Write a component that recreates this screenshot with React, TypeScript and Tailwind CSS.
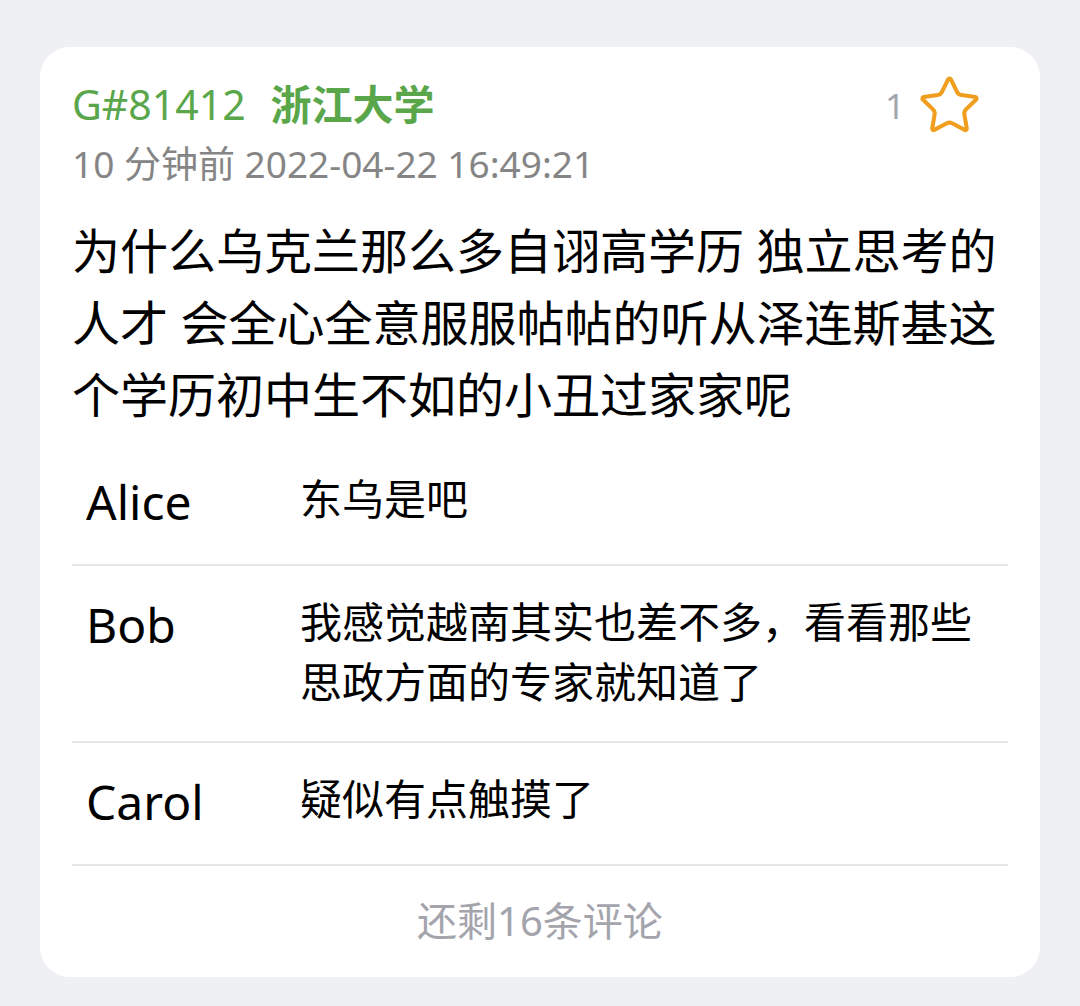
import React from "react";

const comments = [
  { name: "Alice", text: "东乌是吧" },
  { name: "Bob", text: "我感觉越南其实也差不多，看看那些思政方面的专家就知道了" },
  { name: "Carol", text: "疑似有点触摸了" },
];

function Star() {
  return (
    <svg width="65" height="65" viewBox="0 0 24 24" fill="none" stroke="#f09e1e" strokeWidth="1.5" strokeLinecap="round" strokeLinejoin="round">
      <path d="M11.525 2.295a.53.53 0 0 1 .95 0l2.31 4.679a2.123 2.123 0 0 0 1.595 1.16l5.166.756a.53.53 0 0 1 .294.904l-3.736 3.638a2.123 2.123 0 0 0-.611 1.878l.882 5.14a.53.53 0 0 1-.771.56l-4.618-2.428a2.122 2.122 0 0 0-1.973 0L6.396 21.01a.53.53 0 0 1-.77-.56l.881-5.139a2.122 2.122 0 0 0-.611-1.879L2.16 9.795a.53.53 0 0 1 .294-.906l5.165-.755a2.122 2.122 0 0 0 1.597-1.16z" />
    </svg>
  );
}

export default function App() {
  return (
    <div
      className="w-[1080px] h-[1006px] bg-[#eff0f4] pt-[47px] px-[40px]"
      style={{ fontFamily: '"Noto Sans", "Noto Sans CJK SC", sans-serif' }}
    >
      <div className="bg-white rounded-[30px] h-[930px] pt-[29px] px-[32px] flex flex-col">
        <div className="flex items-start justify-between">
          <div className="flex flex-col">
            <div className="flex items-center h-[56px] text-[41px] leading-[56px] text-[#5aa64a]">
              <span>G#81412</span>
              <span className="ml-[25px] font-bold">浙江大学</span>
            </div>
            <div className="mt-[7px] text-[37px] leading-[50px] text-[#858585]">10 分钟前 2022-04-22 16:49:21</div>
          </div>
          <div className="flex items-center mr-[26px] -mt-[3px]">
            <span className="text-[35px] leading-[50px] text-[#a4a4ac] mr-[12px]">1</span>
            <Star />
          </div>
        </div>

        <div className="mt-[26px] text-[48px] leading-[72px] text-black">
          为什么乌克兰那么多自诩高学历 独立思考的人才 会全心全意服服帖帖的听从泽连斯基这个学历初中生不如的小丑过家家呢
        </div>

        <div className="mt-[12px] flex flex-col">
          {comments.map((c) => (
            <div key={c.name} className="flex items-start pl-[14px] pt-[26px] pb-[29px] border-b-[2px] border-[#e5e6ea]">
              <div className="w-[214px] shrink-0 text-[48px] leading-[66px] text-black">{c.name}</div>
              <div className="flex-1 text-[42px] leading-[60px] text-black">{c.text}</div>
            </div>
          ))}
        </div>

        <div className="h-[110px] flex items-center justify-center text-[40px] text-[#a4a4ac]">还剩16条评论</div>
      </div>
    </div>
  );
}
